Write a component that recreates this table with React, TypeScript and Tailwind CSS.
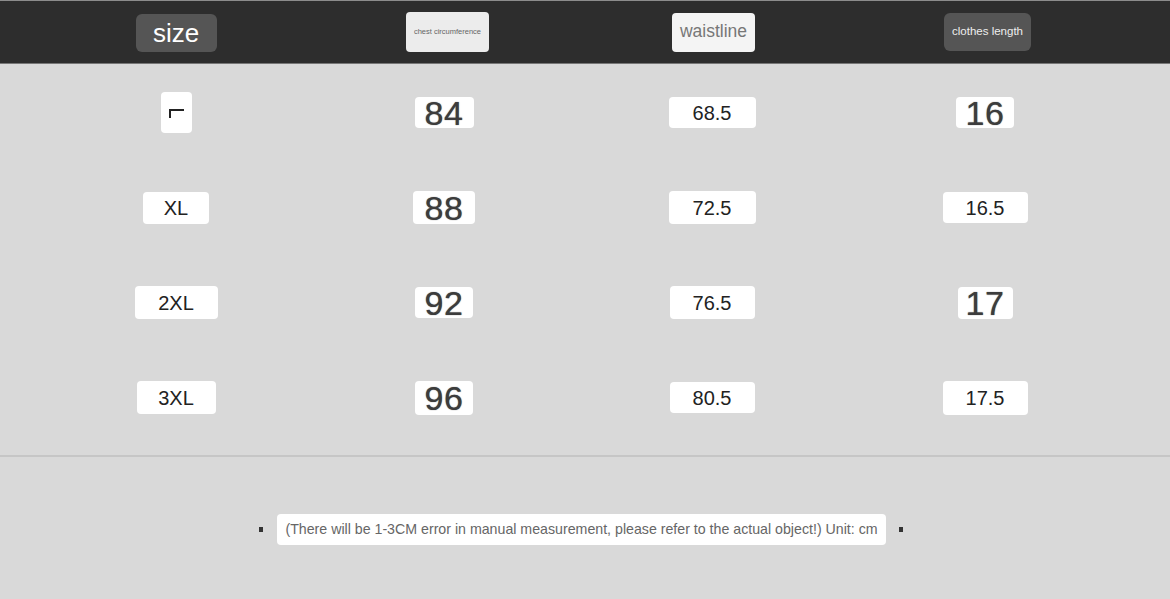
import React from 'react';

type Cell = { text: string; w: number; h: number; big?: boolean; corner?: boolean };

// size chart rows: [size, chest, waist, length]
const rows: Cell[][] = [
  [
    { text: '', w: 31, h: 41, corner: true },
    { text: '84', w: 59, h: 31, big: true },
    { text: '68.5', w: 87, h: 31 },
    { text: '16', w: 58, h: 31, big: true },
  ],
  [
    { text: 'XL', w: 66, h: 32 },
    { text: '88', w: 62, h: 33, big: true },
    { text: '72.5', w: 87, h: 33 },
    { text: '16.5', w: 85, h: 31 },
  ],
  [
    { text: '2XL', w: 83, h: 33 },
    { text: '92', w: 58, h: 31, big: true },
    { text: '76.5', w: 85, h: 33 },
    { text: '17', w: 55, h: 32, big: true },
  ],
  [
    { text: '3XL', w: 79, h: 33 },
    { text: '96', w: 58, h: 34, big: true },
    { text: '80.5', w: 85, h: 31 },
    { text: '17.5', w: 85, h: 34 },
  ],
];

function Tag({ cell }: { cell: Cell }) {
  return (
    <div
      className="flex items-center justify-center rounded-[4px] bg-white"
      style={{ width: cell.w, height: cell.h }}
    >
      {cell.corner ? (
        <span className="mt-[2px] block h-[9px] w-[15px] border-t-2 border-l-2 border-[#222]" />
      ) : cell.big ? (
        <span className="text-[34px] leading-none tracking-[0.5px] text-[#3c3c3c] [text-shadow:0_0_1px_#555]">
          {cell.text}
        </span>
      ) : (
        <span className="text-[20px] leading-none text-[#222]">{cell.text}</span>
      )}
    </div>
  );
}

export default function App() {
  return (
    <div className="flex h-[599px] w-[1170px] flex-col bg-[#d9d9d9] font-['Liberation_Sans',Arial,sans-serif]">
      {/* header bar */}
      <div className="h-px bg-[#8c8c8c]" />
      <div className="grid h-[62px] grid-cols-[268px_268px_268px_278px] items-center bg-[#2d2d2d] pl-[42px]">
        <div className="flex justify-center pt-[2px]">
          <div className="flex h-[38px] w-[81px] items-center justify-center rounded-md bg-[#555555] text-[26px] leading-none text-white">
            size
          </div>
        </div>
        <div className="flex justify-center pl-[7px]">
          <div className="flex h-[40px] w-[83px] items-center justify-center rounded-sm bg-[#ececec] text-[7.5px] leading-none text-[#666]">
            chest circumference
          </div>
        </div>
        <div className="flex justify-center pl-[3px]">
          <div className="flex h-[39px] w-[83px] items-center justify-center rounded-sm bg-[#f4f4f4] text-[17.5px] leading-none text-[#777]">
            waistline
          </div>
        </div>
        <div className="flex justify-center pl-[5px]">
          <div className="flex h-[38px] w-[87px] items-center justify-center rounded-md bg-[#555555] text-[11.5px] leading-none text-[#eeeeee]">
            clothes length
          </div>
        </div>
      </div>
      <div className="h-px bg-[#777777]" />

      {/* measurement rows */}
      <div className="flex flex-col pt-px">
        {rows.map((row, i) => (
          <div key={i} className="grid h-[95px] grid-cols-[268px_268px_268px_278px] items-center pl-[42px]">
            {row.map((cell, j) => (
              <div key={j} className="flex justify-center">
                <Tag cell={cell} />
              </div>
            ))}
          </div>
        ))}
      </div>

      <div className="mt-[10px] h-[2px] bg-[#c6c6c6]" />

      {/* note */}
      <div className="mt-[57px] flex items-center pl-[259px]">
        <span className="h-[5px] w-[4px] bg-[#333]" />
        <div className="ml-[14px] flex h-[31px] w-[609px] items-center justify-center rounded-[4px] bg-white text-[14.2px] text-[#666]">
          (There will be 1-3CM error in manual measurement, please refer to the actual object!) Unit: cm
        </div>
        <span className="ml-[13px] h-[5px] w-[4px] bg-[#333]" />
      </div>
    </div>
  );
}
